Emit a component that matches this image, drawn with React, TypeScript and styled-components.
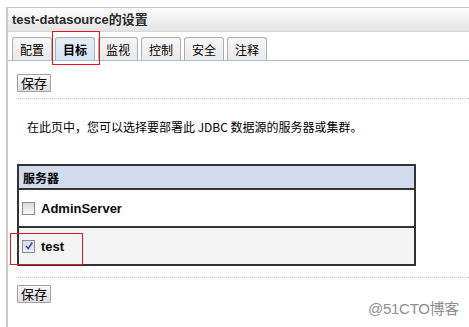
import React from "react";
import styled, { createGlobalStyle } from "styled-components";

const Global = createGlobalStyle`
  html, body { margin: 0; padding: 0; background: #fff; }
  body { font-family: "Liberation Sans", "Noto Sans CJK SC", sans-serif; color: #000; }
`;

const CJK = `"Noto Sans CJK SC", "Liberation Sans", sans-serif`;

const Page = styled.div`
  position: relative;
  width: 469px;
  height: 327px;
  overflow: hidden;
  padding: 7px 0 0 6px;
  box-sizing: border-box;
`;

const Panel = styled.div`
  border-left: 2px solid #c8ccd0;
  border-top: 1px solid #c4c4c4;
  height: 330px;
`;

const TitleBar = styled.div`
  height: 23px;
  line-height: 23px;
  padding-left: 4px;
  background: linear-gradient(#fdfdfd, #e4e4e4);
  border-bottom: 1px solid #d8d8d8;
  font-family: "Liberation Sans", "Noto Sans CJK SC", sans-serif;
  font-weight: bold;
  font-size: 13px;
  color: #2b2b2b;
  white-space: nowrap;
`;

const TabBar = styled.div`
  display: flex;
  gap: 3px;
  padding: 5px 0 0 4px;
  border-bottom: 1px solid #a8bfd7;
`;

const Tab = styled.div<{ $active?: boolean }>`
  position: relative;
  width: 38px;
  height: 22px;
  border: 1px solid #aeaeae;
  border-bottom: none;
  border-radius: 3px 3px 0 0;
  background: ${(p) => (p.$active ? "linear-gradient(#e4eef8, #d6e4f2)" : "linear-gradient(#f6f6f6, #eaeaea)")};
  font-family: ${CJK};
  font-size: 12px;
  font-weight: ${(p) => (p.$active ? "bold" : "normal")};
  display: flex;
  align-items: center;
  justify-content: center;
  color: #000;
`;

const RedMark = styled.div<{ $l: number; $t: number; $w: number; $h: number }>`
  position: absolute;
  left: ${(p) => p.$l}px;
  top: ${(p) => p.$t}px;
  width: ${(p) => p.$w}px;
  height: ${(p) => p.$h}px;
  border: 1px solid #e8141b;
  box-sizing: border-box;
  pointer-events: none;
`;

const Content = styled.div`
  padding: 13px 0 0 9px;
`;

const SaveButton = styled.button<{ $mt?: number }>`
  display: block;
  width: 34px;
  height: 18px;
  margin-top: ${(p) => p.$mt ?? 0}px;
  padding: 0;
  border: 1px solid #a0a0a0;
  border-radius: 1px;
  background: linear-gradient(#fafafa, #dedede);
  font-family: ${CJK};
  font-size: 13px;
  line-height: 16px;
  color: #000;
`;

const Dotted = styled.div<{ $mt: number }>`
  margin: ${(p) => p.$mt}px 0 0 -1px;
  border-top: 1px dotted #c2c2c2;
`;

const Desc = styled.div`
  margin: 20px 0 0 10px;
  font-family: ${CJK};
  font-size: 12px;
  line-height: 16px;
  white-space: nowrap;
`;

const Table = styled.div`
  margin-top: 29px;
  width: 399px;
  border: 2px solid #333;
  box-sizing: border-box;
`;

const HeaderRow = styled.div`
  height: 22px;
  background: #d0dcee;
  border-bottom: 2px solid #333;
  display: flex;
  align-items: center;
  padding-left: 4px;
  font-family: ${CJK};
  font-weight: bold;
  font-size: 12px;
`;

const Row = styled.div<{ $alt?: boolean; $last?: boolean }>`
  height: 36px;
  background: ${(p) => (p.$alt ? "#f4f4f4" : "#fff")};
  border-bottom: ${(p) => (p.$last ? "none" : "2px solid #333")};
  display: flex;
  align-items: center;
  gap: 6px;
  padding-left: 3px;
  font-family: "Liberation Sans", sans-serif;
  font-weight: bold;
  font-size: 13px;
  color: #0a0a0a;
`;

const Box = styled.span<{ $checked?: boolean }>`
  width: 11px;
  height: 11px;
  border: 1px solid #8c8c8c;
  background: ${(p) => (p.$checked ? "linear-gradient(#d6dbe6, #eef0f5)" : "linear-gradient(#dcdcdc, #f7f7f7)")};
  display: flex;
  align-items: center;
  justify-content: center;
`;

const Watermark = styled.div`
  position: absolute;
  right: 10px;
  bottom: 9px;
  font-family: "Liberation Sans", "Noto Sans CJK SC", sans-serif;
  font-size: 15px;
  color: #8e8e8e;
  letter-spacing: -0.3px;
`;

const tabs = ["配置", "目标", "监视", "控制", "安全", "注释"];

export default function App() {
  return (
    <Page>
      <Global />
      <Panel>
        <TitleBar>test-datasource的设置</TitleBar>
        <TabBar>
          {tabs.map((t, i) => (
            <Tab key={t} $active={i === 1}>
              {t}
            </Tab>
          ))}
        </TabBar>
        <Content>
          <SaveButton>保存</SaveButton>
          <Dotted $mt={6} />
          <Desc>在此页中，您可以选择要部署此 JDBC 数据源的服务器或集群。</Desc>
          <Table>
            <HeaderRow>服务器</HeaderRow>
            <Row>
              <Box />
              AdminServer
            </Row>
            <Row $alt $last>
              <Box $checked>
                <svg width="10" height="10" viewBox="0 0 10 10">
                  <path d="M2 5 L4.2 7.6 L8.2 1.5" fill="none" stroke="#3a4f9e" strokeWidth="1.6" />
                </svg>
              </Box>
              test
            </Row>
          </Table>
          <Dotted $mt={11} />
          <SaveButton $mt={7}>保存</SaveButton>
        </Content>
      </Panel>
      <RedMark $l={52} $t={31} $w={48} $h={34} />
      <RedMark $l={10} $t={233} $w={73} $h={32} />
      <Watermark>@51CTO博客</Watermark>
    </Page>
  );
}
